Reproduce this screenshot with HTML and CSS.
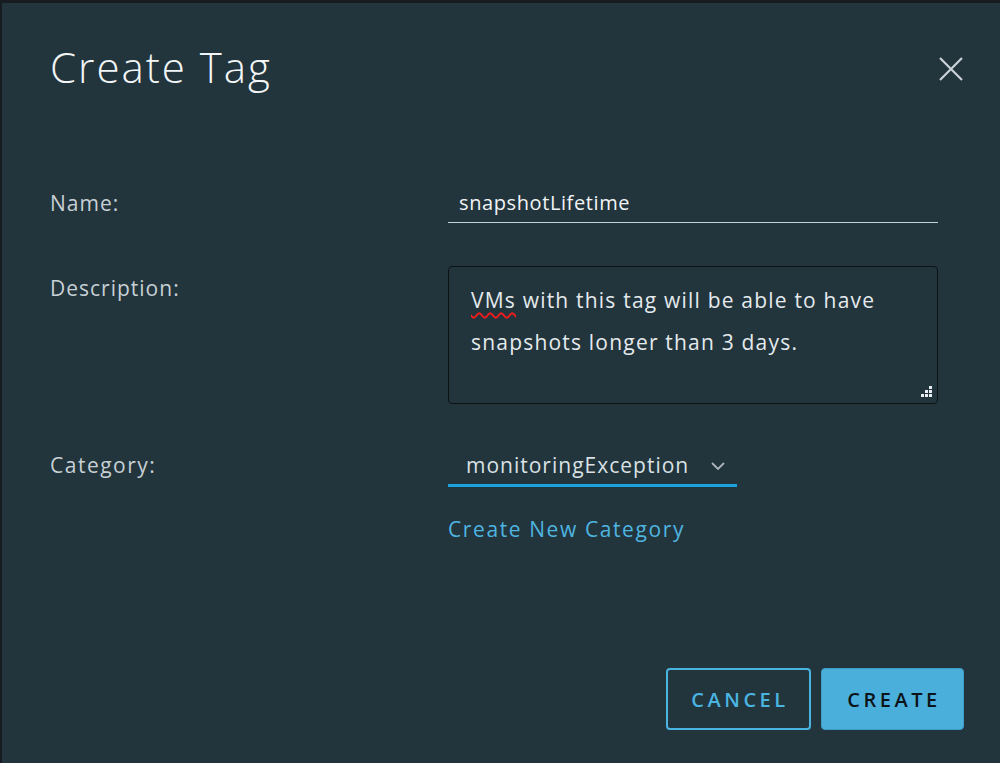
FILE: index.html
```html
<!DOCTYPE html>
<html lang="en">
<head>
    <meta charset="UTF-8">
    <title>Create Tag</title>
    <link rel="stylesheet" href="styles.css">
</head>
<body>
<div class="dialog">
    <div class="dialogHeader">
        <h1 class="title">Create Tag</h1>
        <button class="closeBn" aria-label="Close">
            <svg width="24" height="24" viewBox="0 0 24 24">
                <path d="M1 1L23 23M23 1L1 23" stroke="#c9d2d7" stroke-width="2.2" fill="none"/>
            </svg>
        </button>
    </div>
    <div class="form">
        <label class="label labelName">Name:</label>
        <div class="textInput">snapshotLifetime</div>

        <label class="label labelDesc">Description:</label>
        <div class="textArea">
            <span class="misspelled">VMs</span> with this tag will be able to have snapshots longer than 3 days.
            <svg class="grip" width="12" height="12" viewBox="0 0 12 12">
                <rect x="9" y="0" width="3" height="3" fill="#e8eef1"/>
                <rect x="5" y="4" width="3" height="3" fill="#e8eef1"/>
                <rect x="9" y="4" width="3" height="3" fill="#e8eef1"/>
                <rect x="1" y="8" width="3" height="3" fill="#e8eef1"/>
                <rect x="5" y="8" width="3" height="3" fill="#e8eef1"/>
                <rect x="9" y="8" width="3" height="3" fill="#e8eef1"/>
            </svg>
        </div>

        <label class="label labelCat">Category:</label>
        <div class="fieldCol">
            <div class="selectBox">
                <span>monitoringException</span>
                <svg width="14" height="8" viewBox="0 0 14 8">
                    <path d="M1 1L7 7L13 1" stroke="#aab4b9" stroke-width="1.8" fill="none"/>
                </svg>
            </div>
            <a class="link" href="#">Create New Category</a>
        </div>
    </div>
    <div class="footer">
        <button class="btn btnOutline">CANCEL</button>
        <button class="btn btnPrimary">CREATE</button>
    </div>
</div>
</body>
</html>
```
FILE: styles.css
```css
*{
    margin: 0;
    padding: 0;
    box-sizing: border-box;
}
body
{
    background-color: #171c20;
    font-family: "Open Sans", Lato, sans-serif;
    color: #c7d0d5;
    height: 763px;
    overflow: hidden;
}
.dialog
{
    margin: 3px 0 0 2px;
    height: 760px;
    background-color: #22343c;
    padding: 38px 36px 0 48px;
    display: flex;
    flex-direction: column;
}
.dialogHeader
{
    display: flex;
    justify-content: space-between;
    align-items: flex-start;
}
.title
{
    font-size: 42px;
    font-weight: 300;
    line-height: 52px;
    letter-spacing: 2px;
    color: #f3f6f7;
}
.closeBn
{
    background: none;
    border: none;
    margin-top: 16px;
    margin-right: 1px;
    width: 24px;
    height: 24px;
}
.form
{
    margin-top: 90px;
    display: grid;
    grid-template-columns: 398px 490px;
    row-gap: 43px;
    font-size: 21px;
    letter-spacing: 1px;
}
.label
{
    line-height: 40px;
    color: #c7d0d5;
}
.labelDesc
{
    line-height: 44px;
}
.labelCat
{
    line-height: 37px;
    letter-spacing: 1.5px;
}
.textInput
{
    height: 40px;
    line-height: 39px;
    padding-left: 11px;
    border-bottom: 1px solid #c7d3da;
    color: #f1f4f6;
    font-size: 20px;
    letter-spacing: 0.6px;
}
.textArea
{
    position: relative;
    height: 138px;
    border: 1px solid #0d1215;
    border-radius: 4px;
    padding: 12px 30px 0 22px;
    line-height: 42px;
    letter-spacing: 1.2px;
    color: #e4eaed;
}
.misspelled
{
    text-decoration: underline wavy #f01c1c;
    text-decoration-thickness: 1.5px;
    text-underline-offset: 4px;
}
.grip
{
    position: absolute;
    right: 5px;
    bottom: 5px;
}
.fieldCol
{
    display: flex;
    flex-direction: column;
    align-items: flex-start;
}
.selectBox
{
    width: 289px;
    height: 40px;
    padding: 0 12px 0 18px;
    display: flex;
    align-items: center;
    justify-content: space-between;
    border-bottom: 3px solid #1ba3dd;
    color: #d9e1e5;
    line-height: 37px;
}
.link
{
    margin-top: 27px;
    line-height: 30px;
    letter-spacing: 1.6px;
    color: #4eb5e0;
    text-decoration: none;
}
.footer
{
    margin-top: auto;
    margin-bottom: 33px;
    display: flex;
    justify-content: flex-end;
    gap: 10px;
}
.btn
{
    height: 62px;
    border-radius: 4px;
    font-family: "Open Sans", Lato, sans-serif;
    font-size: 20px;
    font-weight: 600;
    letter-spacing: 3.5px;
    padding-left: 3px;
}
.btnOutline
{
    width: 145px;
    background: none;
    border: 2px solid #4ab4e0;
    color: #4ab4e0;
}
.btnPrimary
{
    width: 143px;
    background-color: #4aafdb;
    border: 1px solid #3e9dc6;
    color: #0d1418;
}
```
